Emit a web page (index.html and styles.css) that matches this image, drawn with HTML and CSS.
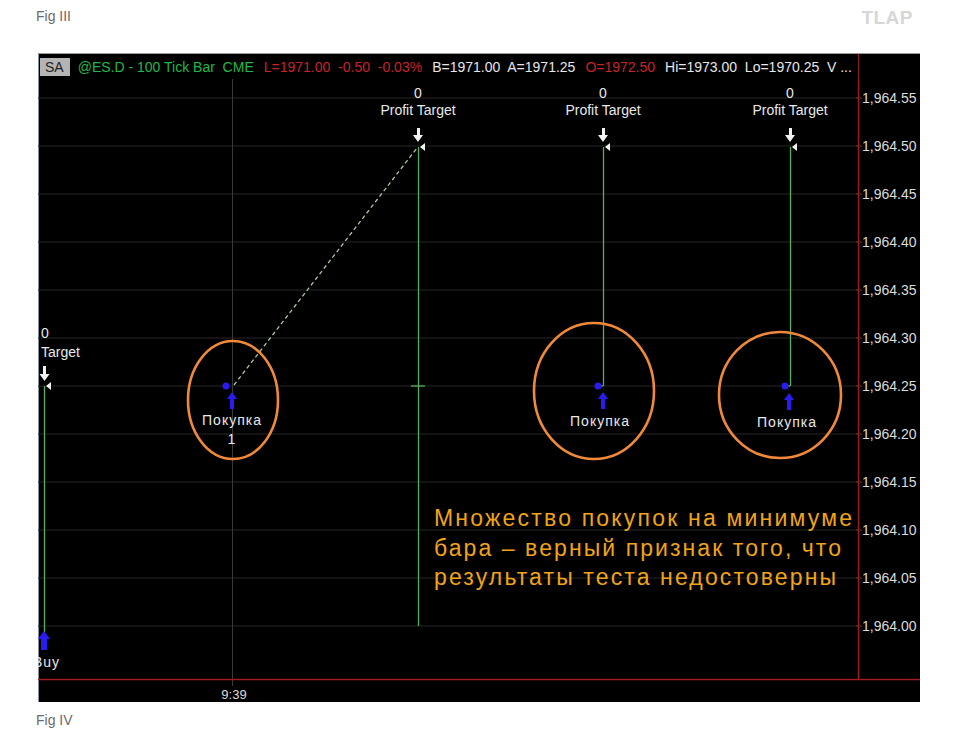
FILE: index.html
```html
<!DOCTYPE html>
<html>
<head>
  <title>Fig III - ES.D 100 Tick Bar</title>
  <meta name="viewport" content="width=device-width, initial-scale=1.0" />
  <link rel="stylesheet" href="styles.css">
</head>
<body>
  <div class="page">
    <div class="top-row">
      <span class="caption">Fig III</span>
      <span class="brand">TLAP</span>
    </div>

    <div class="chart">
      <div class="chart-head">
        <div class="ticker">
          <span class="tag">SA</span>
          <span class="green">@ES.D - 100 Tick Bar&nbsp; CME</span>
          <span class="red">L=1971.00&nbsp; -0.50&nbsp; -0.03%</span>
          <span class="white">B=1971.00&nbsp; A=1971.25</span>
          <span class="red">O=1972.50</span>
          <span class="white">Hi=1973.00&nbsp; Lo=1970.25&nbsp; V ...</span>
        </div>
        <div class="axis-cap"></div>
      </div>

      <svg class="plot" width="882" height="623" viewBox="38 79 882 623">
        <!-- price grid -->
        <g class="grid">
          <line x1="38" y1="98" x2="858" y2="98" />
          <line x1="38" y1="146" x2="858" y2="146" />
          <line x1="38" y1="194" x2="858" y2="194" />
          <line x1="38" y1="242" x2="858" y2="242" />
          <line x1="38" y1="290" x2="858" y2="290" />
          <line x1="38" y1="338" x2="858" y2="338" />
          <line x1="38" y1="386" x2="858" y2="386" />
          <line x1="38" y1="434" x2="858" y2="434" />
          <line x1="38" y1="482" x2="858" y2="482" />
          <line x1="38" y1="530" x2="858" y2="530" />
          <line x1="38" y1="578" x2="858" y2="578" />
          <line x1="38" y1="626" x2="858" y2="626" />
          <line x1="232.5" y1="79" x2="232.5" y2="686" />
        </g>

        <!-- axes -->
        <line class="axis" x1="858.5" y1="79" x2="858.5" y2="679" />
        <line class="axis" x1="38" y1="679.5" x2="920" y2="679.5" />

        <g class="ticks">
          <line x1="856" y1="98" x2="862" y2="98" />
          <line x1="856" y1="146" x2="862" y2="146" />
          <line x1="856" y1="194" x2="862" y2="194" />
          <line x1="856" y1="242" x2="862" y2="242" />
          <line x1="856" y1="290" x2="862" y2="290" />
          <line x1="856" y1="338" x2="862" y2="338" />
          <line x1="856" y1="386" x2="862" y2="386" />
          <line x1="856" y1="434" x2="862" y2="434" />
          <line x1="856" y1="482" x2="862" y2="482" />
          <line x1="856" y1="530" x2="862" y2="530" />
          <line x1="856" y1="578" x2="862" y2="578" />
          <line x1="856" y1="626" x2="862" y2="626" />
        </g>

        <g class="price">
          <text x="862" y="103">1,964.55</text>
          <text x="862" y="151">1,964.50</text>
          <text x="862" y="199">1,964.45</text>
          <text x="862" y="247">1,964.40</text>
          <text x="862" y="295">1,964.35</text>
          <text x="862" y="343">1,964.30</text>
          <text x="862" y="391">1,964.25</text>
          <text x="862" y="439">1,964.20</text>
          <text x="862" y="487">1,964.15</text>
          <text x="862" y="535">1,964.10</text>
          <text x="862" y="583">1,964.05</text>
          <text x="862" y="631">1,964.00</text>
        </g>

        <text class="time" x="234" y="699">9:39</text>

        <!-- trades -->
        <line class="path" x1="234" y1="385" x2="417" y2="148" />
        <g class="trade">
          <line x1="44.5" y1="386" x2="44.5" y2="632" />
          <line x1="418.5" y1="147" x2="418.5" y2="626" />
          <line x1="411" y1="386" x2="425" y2="386" />
          <line x1="603.5" y1="147" x2="603.5" y2="386" />
          <line x1="598" y1="386" x2="603" y2="386" />
          <line x1="790.5" y1="147" x2="790.5" y2="386" />
          <line x1="785" y1="386" x2="790" y2="386" />
        </g>

        <!-- exits: label, arrow, marker -->
        <g class="label">
          <text x="41" y="338">0</text>
          <text x="41" y="357">Target</text>
          <text class="mid" x="418" y="98">0</text>
          <text class="mid" x="418" y="115">Profit Target</text>
          <text class="mid" x="603" y="98">0</text>
          <text class="mid" x="603" y="115">Profit Target</text>
          <text class="mid" x="790" y="98">0</text>
          <text class="mid" x="790" y="115">Profit Target</text>
        </g>
        <g class="exit">
          <rect x="43" y="366" width="3" height="10" />
          <polygon points="39.5,374 49.5,374 44.5,381" />
          <polygon points="46,386 51,382 51,390" />
          <rect x="417" y="128" width="3" height="9" />
          <polygon points="413,135 423,135 418,142" />
          <polygon points="420,147 425,143 425,151" />
          <rect x="602" y="128" width="3" height="9" />
          <polygon points="598,135 608,135 603,142" />
          <polygon points="605,147 610,143 610,151" />
          <rect x="789" y="128" width="3" height="9" />
          <polygon points="785,135 795,135 790,142" />
          <polygon points="792,147 797,143 797,151" />
        </g>

        <!-- entries -->
        <g class="entry">
          <circle cx="226" cy="386" r="3.5" />
          <polygon points="232,392 237,399 227,399" />
          <rect x="230" y="398" width="4" height="11" />
          <circle cx="598" cy="386" r="3.5" />
          <polygon points="603,392 608,399 598,399" />
          <rect x="601" y="398" width="4" height="11" />
          <circle cx="785" cy="386" r="3.5" />
          <polygon points="789,393 794,400 784,400" />
          <rect x="787" y="399" width="4" height="11" />
          <polygon points="44,631 50,639 38,639" />
          <rect x="41" y="638" width="6" height="12" />
        </g>
        <g class="label buy">
          <text class="mid" x="232" y="425">Покупка</text>
          <text class="mid" x="232" y="444">1</text>
          <text class="mid" x="600" y="426">Покупка</text>
          <text class="mid" x="787" y="427">Покупка</text>
          <text x="33" y="667">Buy</text>
        </g>

        <!-- highlight rings -->
        <g class="ring">
          <ellipse cx="233" cy="400" rx="45" ry="59" />
          <ellipse cx="594" cy="391" rx="60" ry="68" />
          <ellipse cx="780" cy="395" rx="61" ry="63" />
        </g>

        <g class="note">
          <text x="434" y="526" textLength="418" lengthAdjust="spacing">Множество покупок на минимуме</text>
          <text x="434" y="556" textLength="407" lengthAdjust="spacing">бара – верный признак того, что</text>
          <text x="434" y="585" textLength="402" lengthAdjust="spacing">результаты теста недостоверны</text>
        </g>
      </svg>
    </div>

    <div class="caption bottom">Fig IV</div>
  </div>
</body>
</html>
```

FILE: styles.css
```css
body {
  margin: 0;
  background-color: #fff;
  font-family: "Liberation Sans", Arial, sans-serif;
}
.page {
  padding: 7px 0 0 36px;
}
.top-row {
  display: flex;
  justify-content: space-between;
  align-items: center;
  width: 877px;
  height: 18px;
}
.caption {
  font-size: 14px;
  line-height: 16px;
  color: #6b6b6b;
}
.brand {
  font-size: 19px;
  font-weight: bold;
  color: #d6d6d6;
  letter-spacing: 0.5px;
  padding-top: 4px;
}
.chart {
  width: 881px;
  margin: 28px 0 0 2px;
  background-color: #000;
  border-top: 1px solid #9a9a9a;
  border-left: 1px solid #8894a4;
  display: flex;
  flex-direction: column;
}
.chart-head {
  display: flex;
  height: 25px;
}
.ticker {
  width: 819px;
  display: flex;
  align-items: center;
  gap: 10px;
  padding-left: 1px;
  font-size: 14px;
  white-space: nowrap;
  overflow: hidden;
}
.tag {
  background-color: #b4b4b4;
  color: #222;
  padding: 0 6px 0 5px;
  line-height: 18px;
  margin-right: -2px;
}
.green { color: #1fb84a; }
.red { color: #c8222a; }
.white { color: #e6e6e6; }
.axis-cap {
  width: 61px;
  border-left: 1px solid #8c1c22;
}
.plot {
  display: block;
  overflow: hidden;
  margin-left: -1px;
}
.grid line {
  stroke: #262626;
  stroke-width: 1;
}
.grid line:last-child {
  stroke: #3a3a3a;
}
.axis {
  stroke: #a01c24;
  stroke-width: 1.4;
}
.ticks line {
  stroke: #7a2a2a;
  stroke-width: 1;
}
.price text {
  font-size: 14px;
  fill: #dcdcdc;
}
.time {
  font-size: 13px;
  fill: #dcdcdc;
  text-anchor: middle;
}
.path {
  stroke: #a8c8a0;
  stroke-width: 1.3;
  stroke-dasharray: 4 3;
}
.trade line {
  stroke: #58b058;
  stroke-width: 1.3;
}
.label text {
  font-size: 14px;
  fill: #e8e8e8;
}
.label .mid {
  text-anchor: middle;
}
.buy text {
  letter-spacing: 1px;
}
.exit rect,
.exit polygon {
  fill: #f2f2f2;
}
.entry circle,
.entry rect,
.entry polygon {
  fill: #2a1cf0;
}
.ring ellipse {
  fill: none;
  stroke: #f08a3a;
  stroke-width: 2.6;
}
.note text {
  font-size: 23px;
  fill: #f0a418;
}
.bottom {
  margin-top: 10px;
}
```
